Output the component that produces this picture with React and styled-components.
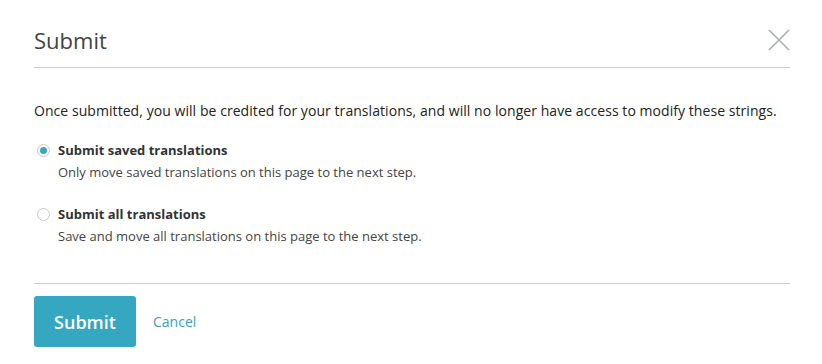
import styled, { createGlobalStyle } from "styled-components";

const GlobalStyle = createGlobalStyle`
  body {
    margin: 0;
    background: #fff;
    font-family: "Open Sans", "Noto Sans", sans-serif;
    color: #222;
  }
`;

const Modal = styled.div`
  width: 822px;
  height: 364px;
  box-sizing: border-box;
  padding: 0 32px 0 34px;
  background: #fff;
`;

const Header = styled.div`
  display: flex;
  align-items: center;
  justify-content: space-between;
  height: 68px;
  border-bottom: 1px solid #cfcfcf;
  box-sizing: border-box;
  padding-top: 12px;
`;

const Title = styled.h2`
  margin: 0;
  font-size: 22px;
  font-weight: 400;
  color: #444;
`;

const Close = styled.button`
  border: 0;
  background: none;
  padding: 0;
  width: 22px;
  height: 22px;
  display: flex;
  cursor: pointer;
`;

const Body = styled.div`
  padding: 33px 0 38px;
  border-bottom: 1px solid #cfcfcf;
`;

const Intro = styled.p`
  margin: 0 0 20px;
  font-size: 14px;
  line-height: 20px;
  letter-spacing: 0.06px;
  color: #222;
`;

const Option = styled.label`
  display: grid;
  grid-template-columns: 24px 1fr;
  align-items: center;
  row-gap: 4px;
  margin-bottom: ${(p) => (p.last ? "0" : "24px")};
  cursor: pointer;
`;

const Radio = styled.span`
  width: 13px;
  height: 13px;
  box-sizing: border-box;
  border-radius: 50%;
  border: 1px solid #c8c8c8;
  background: #fff;
  margin-left: 3px;
  display: flex;
  align-items: center;
  justify-content: center;
  &::after {
    content: "";
    width: 7px;
    height: 7px;
    border-radius: 50%;
    background: ${(p) => (p.checked ? "#35a7c1" : "transparent")};
  }
`;

const OptionTitle = styled.span`
  font-size: 13px;
  font-weight: 700;
  line-height: 18px;
  color: #333;
`;

const OptionDesc = styled.span`
  grid-column: 2;
  font-size: 13px;
  line-height: 18px;
  color: #444;
`;

const Footer = styled.div`
  display: flex;
  align-items: center;
  gap: 17px;
  padding-top: 12px;
`;

const SubmitButton = styled.button`
  width: 102px;
  height: 51px;
  border: 0;
  border-radius: 3px;
  background: #35a7c1;
  color: #fff;
  font-family: inherit;
  font-size: 18px;
  font-weight: 600;
  cursor: pointer;
`;

const CancelLink = styled.a`
  font-size: 14px;
  color: #3a9ec0;
  text-decoration: none;
  cursor: pointer;
`;

export default function App() {
  return (
    <>
      <GlobalStyle />
      <Modal>
        <Header>
          <Title>Submit</Title>
          <Close aria-label="Close">
            <svg width="22" height="22" viewBox="0 0 22 22">
              <path d="M1 1 L21 21 M21 1 L1 21" stroke="#a9b0b0" strokeWidth="1.6" />
            </svg>
          </Close>
        </Header>
        <Body>
          <Intro>
            Once submitted, you will be credited for your translations, and will no longer have access to modify these strings.
          </Intro>
          <Option>
            <Radio checked />
            <OptionTitle>Submit saved translations</OptionTitle>
            <OptionDesc>Only move saved translations on this page to the next step.</OptionDesc>
          </Option>
          <Option last>
            <Radio />
            <OptionTitle>Submit all translations</OptionTitle>
            <OptionDesc>Save and move all translations on this page to the next step.</OptionDesc>
          </Option>
        </Body>
        <Footer>
          <SubmitButton>Submit</SubmitButton>
          <CancelLink>Cancel</CancelLink>
        </Footer>
      </Modal>
    </>
  );
}
